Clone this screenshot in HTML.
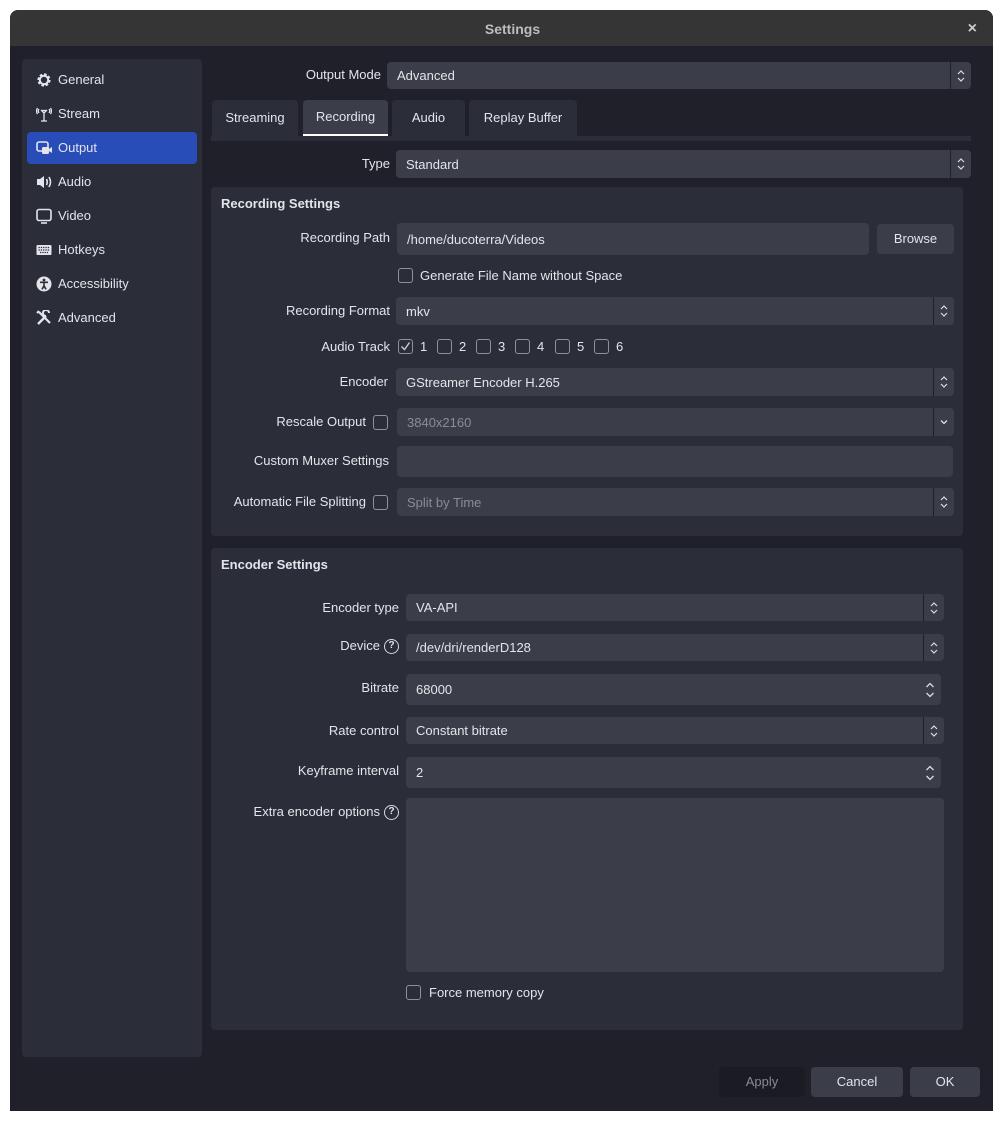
<!DOCTYPE html>
<html><head><meta charset="utf-8"><style>
*{box-sizing:border-box;margin:0;padding:0}
body{width:1003px;height:1122px;background:#fff;font-family:"Liberation Sans",sans-serif;font-size:13px;color:#e4e5ea;position:relative;overflow:hidden}
.a{position:absolute}
.win{left:10px;top:10px;width:983px;height:1101px;background:#1f2029;border-radius:8px 8px 0 0;overflow:hidden}
.title{left:10px;top:10px;width:983px;height:36px;background:#353535;border-radius:8px 8px 0 0;text-align:center;line-height:38px;font-weight:bold;color:#bdbdbd;font-size:14px;padding-left:22px}
.panel{background:#2b2d38;border-radius:4px}
.in{background:#3b3d48;border-radius:4px;padding-left:10px;display:flex;align-items:center}
.dis{color:#8a8c95}
.lbl{text-align:right;white-space:nowrap}
.cb{width:15px;height:15px;border:1.5px solid #8f919a;border-radius:3px}
.sep{position:absolute;right:20px;top:0;bottom:0;width:1px;background:#1f2029}
.arr{position:absolute;right:5px;top:50%;margin-top:-7px}
.tab{top:100px;height:36px;background:#2b2d38;border-radius:4px 4px 0 0;text-align:center;line-height:36px}
.btn{top:1067px;height:30px;border-radius:4px;background:#3b3d48;text-align:center;line-height:30px}
.side{left:36px;width:160px;height:20px;line-height:20px;padding-left:22px}
.side svg{position:absolute;left:0;top:2px}
.q{display:inline-block;width:15px;height:15px;border:1.5px solid #d8d9de;border-radius:50%;font-size:10px;line-height:12px;text-align:center;font-weight:bold;vertical-align:middle;margin-left:4px}
</style></head><body>
<div class="a win"></div>
<div class="a title">Settings<span class="a" style="right:16px;top:0;font-size:16px;color:#ccc">×</span></div>

<div class="a panel" style="left:22px;top:59px;width:180px;height:998px"></div>
<div class="a" style="left:27px;top:132px;width:170px;height:32px;background:#284cb8;border-radius:4px"></div>

<div class="a side" style="top:70px"><svg width="16" height="16" viewBox="0 0 16 16"><circle cx="8" cy="8" r="5" fill="none" stroke="#e4e5ea" stroke-width="3.2" stroke-dasharray="2.4 1.5"/><circle cx="8" cy="8" r="4.2" fill="none" stroke="#e4e5ea" stroke-width="2"/></svg>General</div>
<div class="a side" style="top:104px"><svg width="16" height="16" viewBox="0 0 16 16" fill="none" stroke="#e4e5ea" stroke-width="1.3"><path d="M8 6v9M5 15h6M5.5 4.5l5 0M8 7l-3-3M8 7l3-3"/><path d="M3 3q-1.5 2 0 4M13 3q1.5 2 0 4M1.5 2q-2 3 0 6M14.5 2q2 3 0 6"/></svg>Stream</div>
<div class="a side" style="top:138px"><svg width="17" height="16" viewBox="0 0 17 16"><rect x="1" y="2" width="11" height="9" rx="2" fill="none" stroke="#e4e5ea" stroke-width="1.6"/><rect x="6" y="7" width="7" height="7" rx="1.5" fill="#e4e5ea"/><path d="M13 9l3-2v6l-3-2z" fill="#e4e5ea"/></svg>Output</div>
<div class="a side" style="top:172px"><svg width="17" height="16" viewBox="0 0 17 16"><path d="M1 5h3l4-3v12l-4-3H1z" fill="#e4e5ea"/><path d="M10.5 5q1.5 3 0 6M13 3q3 5 0 10" stroke="#e4e5ea" stroke-width="1.6" fill="none"/></svg>Audio</div>
<div class="a side" style="top:206px"><svg width="16" height="16" viewBox="0 0 16 16"><rect x="1" y="1.5" width="14" height="11" rx="2" fill="none" stroke="#e4e5ea" stroke-width="1.6"/><path d="M5 15h6" stroke="#e4e5ea" stroke-width="1.6"/></svg>Video</div>
<div class="a side" style="top:240px"><svg width="16" height="16" viewBox="0 0 16 16"><rect x="0.5" y="3" width="15" height="10" rx="1" fill="#e4e5ea"/><path d="M2.5 5.5h11M2.5 8h11M4 10.5h8" stroke="#2b2d38" stroke-width="1.2" stroke-dasharray="1.3 1"/></svg>Hotkeys</div>
<div class="a side" style="top:274px"><svg width="16" height="16" viewBox="0 0 16 16"><circle cx="8" cy="8" r="7.5" fill="#e4e5ea"/><circle cx="8" cy="4" r="1.4" fill="#2b2d38"/><path d="M4 6.3h8M8 6.3v3.5l-2 3.5M8 9.8l2 3.5" stroke="#2b2d38" stroke-width="1.6" fill="none"/></svg>Accessibility</div>
<div class="a side" style="top:308px"><svg width="16" height="16" viewBox="0 0 16 16" stroke="#e4e5ea" fill="none"><path d="M2 14L10 6" stroke-width="2.4"/><path d="M10 6a3 3 0 1 1 3 -3" stroke-width="2"/><path d="M3 2l11 11" stroke-width="2.2"/><path d="M1 3l2-2" stroke-width="2"/></svg>Advanced</div>

<div class="a lbl" style="right:622px;top:67px">Output Mode</div>
<div class="a in" style="left:387px;top:62px;width:584px;height:27px">Advanced<span class="sep"></span><svg class="arr" width="10" height="14" viewBox="0 0 10 14" fill="none" stroke="#ddd" stroke-width="1.2"><path d="M2 5l3-3 3 3M2 9l3 3 3-3"/></svg></div>

<div class="a tab" style="left:212px;width:86px">Streaming</div>
<div class="a tab" style="left:303px;width:85px;background:#3b3d48;line-height:34px;border-bottom:2px solid #fff">Recording</div>
<div class="a tab" style="left:392px;width:73px">Audio</div>
<div class="a tab" style="left:469px;width:108px">Replay Buffer</div>
<div class="a" style="left:211px;top:136px;width:760px;height:5px;background:#2b2d38"></div>

<div class="a lbl" style="right:613px;top:156px">Type</div>
<div class="a in" style="left:396px;top:150px;width:575px;height:28px">Standard<span class="sep"></span><svg class="arr" width="10" height="14" viewBox="0 0 10 14" fill="none" stroke="#ddd" stroke-width="1.2"><path d="M2 5l3-3 3 3M2 9l3 3 3-3"/></svg></div>

<div class="a panel" style="left:211px;top:187px;width:752px;height:349px"></div>
<div class="a" style="left:221px;top:196px;font-weight:bold">Recording Settings</div>
<div class="a lbl" style="right:613px;top:230px">Recording Path</div>
<div class="a in" style="left:397px;top:223px;width:472px;height:32px">/home/ducoterra/Videos</div>
<div class="a btn" style="left:877px;top:224px;width:77px">Browse</div>
<div class="a cb" style="left:398px;top:268px"></div>
<div class="a" style="left:420px;top:268px">Generate File Name without Space</div>

<div class="a lbl" style="right:613px;top:303px">Recording Format</div>
<div class="a in" style="left:396px;top:297px;width:558px;height:28px">mkv<span class="sep"></span><svg class="arr" width="10" height="14" viewBox="0 0 10 14" fill="none" stroke="#ddd" stroke-width="1.2"><path d="M2 5l3-3 3 3M2 9l3 3 3-3"/></svg></div>

<div class="a lbl" style="right:613px;top:339px">Audio Track</div>
<div class="a cb" style="left:398px;top:339px"><svg class="a" style="left:1px;top:1px" width="11" height="11" viewBox="0 0 11 11"><path d="M1.5 5.5l3 3 5-7" stroke="#ccc" stroke-width="1.4" fill="none"/></svg></div>
<div class="a" style="left:420px;top:339px">1</div>
<div class="a cb" style="left:437px;top:339px"></div><div class="a" style="left:459px;top:339px">2</div>
<div class="a cb" style="left:476px;top:339px"></div><div class="a" style="left:498px;top:339px">3</div>
<div class="a cb" style="left:515px;top:339px"></div><div class="a" style="left:537px;top:339px">4</div>
<div class="a cb" style="left:555px;top:339px"></div><div class="a" style="left:577px;top:339px">5</div>
<div class="a cb" style="left:594px;top:339px"></div><div class="a" style="left:616px;top:339px">6</div>

<div class="a lbl" style="right:615px;top:374px">Encoder</div>
<div class="a in" style="left:396px;top:368px;width:558px;height:28px">GStreamer Encoder H.265<span class="sep"></span><svg class="arr" width="10" height="14" viewBox="0 0 10 14" fill="none" stroke="#ddd" stroke-width="1.2"><path d="M2 5l3-3 3 3M2 9l3 3 3-3"/></svg></div>

<div class="a lbl" style="right:637px;top:414px">Rescale Output</div>
<div class="a cb" style="left:373px;top:415px"></div>
<div class="a in dis" style="left:397px;top:408px;width:557px;height:28px">3840x2160<span class="sep"></span><svg class="arr" width="10" height="14" viewBox="0 0 10 14" fill="none" stroke="#ddd" stroke-width="1.3"><path d="M2 5.5l3 3 3-3"/></svg></div>

<div class="a lbl" style="right:614px;top:453px">Custom Muxer Settings</div>
<div class="a in" style="left:397px;top:446px;width:556px;height:31px"></div>

<div class="a lbl" style="right:637px;top:494px">Automatic File Splitting</div>
<div class="a cb" style="left:373px;top:495px"></div>
<div class="a in dis" style="left:397px;top:488px;width:557px;height:28px">Split by Time<span class="sep"></span><svg class="arr" width="10" height="14" viewBox="0 0 10 14" fill="none" stroke="#ddd" stroke-width="1.2"><path d="M2 5l3-3 3 3M2 9l3 3 3-3"/></svg></div>

<div class="a panel" style="left:211px;top:548px;width:752px;height:482px"></div>
<div class="a" style="left:221px;top:557px;font-weight:bold">Encoder Settings</div>

<div class="a lbl" style="right:604px;top:600px">Encoder type</div>
<div class="a in" style="left:406px;top:594px;width:538px;height:27px">VA-API<span class="sep"></span><svg class="arr" width="10" height="14" viewBox="0 0 10 14" fill="none" stroke="#ddd" stroke-width="1.2"><path d="M2 5l3-3 3 3M2 9l3 3 3-3"/></svg></div>

<div class="a lbl" style="right:604px;top:638px">Device<span class="q">?</span></div>
<div class="a in" style="left:406px;top:634px;width:538px;height:27px">/dev/dri/renderD128<span class="sep"></span><svg class="arr" width="10" height="14" viewBox="0 0 10 14" fill="none" stroke="#ddd" stroke-width="1.2"><path d="M2 5l3-3 3 3M2 9l3 3 3-3"/></svg></div>

<div class="a lbl" style="right:604px;top:680px">Bitrate</div>
<div class="a in" style="left:406px;top:674px;width:535px;height:31px">68000<svg class="arr" style="right:6px;margin-top:-8px" width="10" height="16" viewBox="0 0 10 16" fill="none" stroke="#ddd" stroke-width="1.3"><path d="M1.5 5l3.5-3.5 3.5 3.5M1.5 11l3.5 3.5 3.5-3.5"/></svg></div>

<div class="a lbl" style="right:604px;top:723px">Rate control</div>
<div class="a in" style="left:406px;top:717px;width:538px;height:27px">Constant bitrate<span class="sep"></span><svg class="arr" width="10" height="14" viewBox="0 0 10 14" fill="none" stroke="#ddd" stroke-width="1.2"><path d="M2 5l3-3 3 3M2 9l3 3 3-3"/></svg></div>

<div class="a lbl" style="right:604px;top:763px">Keyframe interval</div>
<div class="a in" style="left:406px;top:757px;width:535px;height:31px">2<svg class="arr" style="right:6px;margin-top:-8px" width="10" height="16" viewBox="0 0 10 16" fill="none" stroke="#ddd" stroke-width="1.3"><path d="M1.5 5l3.5-3.5 3.5 3.5M1.5 11l3.5 3.5 3.5-3.5"/></svg></div>

<div class="a lbl" style="right:604px;top:804px">Extra encoder options<span class="q">?</span></div>
<div class="a in" style="left:406px;top:798px;width:538px;height:174px"></div>

<div class="a cb" style="left:406px;top:985px"></div>
<div class="a" style="left:429px;top:985px">Force memory copy</div>

<div class="a btn" style="left:719px;width:86px;background:#1a1b23;color:#888a92">Apply</div>
<div class="a btn" style="left:811px;width:92px">Cancel</div>
<div class="a btn" style="left:910px;width:70px">OK</div>
</body></html>
